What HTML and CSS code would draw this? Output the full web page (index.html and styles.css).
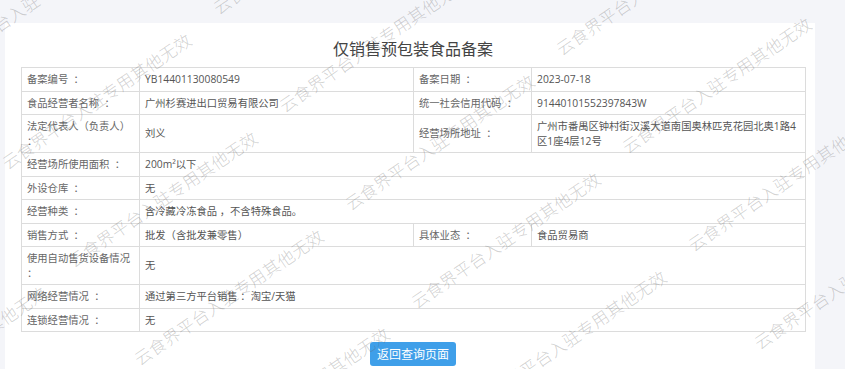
FILE: index.html
```html
<!DOCTYPE html>
<html lang="zh-CN">
<head>
<meta charset="utf-8">
<title>仅销售预包装食品备案</title>
<link rel="stylesheet" href="styles.css">
</head>
<body>
<div class="panel">
  <h1 class="title">仅销售预包装食品备案</h1>
  <table class="info">
    <colgroup>
      <col class="c-label"><col class="c-value"><col class="c-label"><col class="c-value">
    </colgroup>
    <tr><td class="lbl">备案编号&nbsp; ：</td><td>YB14401130080549</td><td class="lbl">备案日期&nbsp; ：</td><td>2023-07-18</td></tr>
    <tr><td class="lbl">食品经营者名称&nbsp; ：</td><td>广州杉赛进出口贸易有限公司</td><td class="lbl">统一社会信用代码&nbsp; ：</td><td>91440101552397843W</td></tr>
    <tr><td class="lbl">法定代表人（负责人）&nbsp; ：</td><td>刘义</td><td class="lbl">经营场所地址&nbsp; ：</td><td class="addr">广州市番禺区钟村街汉溪大道南国奥林匹克花园北奥1路4区1座4层12号</td></tr>
    <tr><td class="lbl">经营场所使用面积&nbsp; ：</td><td colspan="3">200m²以下</td></tr>
    <tr><td class="lbl">外设仓库&nbsp; ：</td><td colspan="3">无</td></tr>
    <tr><td class="lbl">经营种类&nbsp; ：</td><td colspan="3">含冷藏冷冻食品 ，不含特殊食品。</td></tr>
    <tr><td class="lbl">销售方式&nbsp; ：</td><td>批发（含批发兼零售）</td><td class="lbl">具体业态&nbsp; ：</td><td>食品贸易商</td></tr>
    <tr><td class="lbl">使用自动售货设备情况&nbsp; ：</td><td colspan="3">无</td></tr>
    <tr><td class="lbl">网络经营情况&nbsp; ：</td><td colspan="3">通过第三方平台销售 ：淘宝/天猫</td></tr>
    <tr><td class="lbl">连锁经营情况&nbsp; ：</td><td colspan="3">无</td></tr>
  </table>
  <div class="actions"><button class="btn">返回查询页面</button></div>
</div>
<div class="wm-layer" aria-hidden="true">
  <span class="wm w1">云食界平台入驻专用其他无效</span>
  <span class="wm w2">云食界平台入驻专用其他无效</span>
  <span class="wm w3">云食界平台入驻专用其他无效</span>
  <span class="wm w4">云食界平台入驻专用其他无效</span>
  <span class="wm w5">云食界平台入驻专用其他无效</span>
  <span class="wm w6">云食界平台入驻专用其他无效</span>
  <span class="wm w7">云食界平台入驻专用其他无效</span>
  <span class="wm w8">云食界平台入驻专用其他无效</span>
  <span class="wm w9">云食界平台入驻专用其他无效</span>
  <span class="wm w10">云食界平台入驻专用其他无效</span>
  <span class="wm w11">云食界平台入驻专用其他无效</span>
  <span class="wm w12">云食界平台入驻专用其他无效</span>
  <span class="wm w13">云食界平台入驻专用其他无效</span>
  <span class="wm w14">云食界平台入驻专用其他无效</span>
  <span class="wm w15">云食界平台入驻专用其他无效</span>
  <span class="wm w16">云食界平台入驻专用其他无效</span>
  <span class="wm w17">云食界平台入驻专用其他无效</span>
</div>
</body>
</html>
```
FILE: styles.css
```css
html, body {
  margin: 0;
  padding: 0;
}
body {
  background: #f4f5f9;
  width: 845px;
  height: 369px;
  overflow: hidden;
  position: relative;
  font-family: "Open Sans", "Noto Sans CJK SC", sans-serif;
}
.panel {
  margin: 23px 0 0 5px;
  width: 810px;
  min-height: 346px;
  box-sizing: border-box;
  background: #fff;
  padding: 13px 10px 0 16px;
}
.title {
  margin: 0 0 7px;
  text-align: center;
  font-family: "Noto Sans CJK SC", sans-serif;
  font-weight: normal;
  font-size: 16px;
  line-height: 24px;
  color: #444;
}
.info {
  width: 784px;
  border-collapse: collapse;
  table-layout: fixed;
  font-size: 10.3px;
  color: #555;
}
.c-label { width: 118px; }
.c-value { width: 274px; }
.info td {
  border: 1px solid #dcdcdc;
  padding: 4px 1px 4px 5px;
  line-height: 14.5px;
  vertical-align: middle;
  word-break: break-all;
}
.info td.lbl {
  color: #666;
}
.actions {
  display: flex;
  justify-content: center;
  padding-top: 10px;
}
.btn {
  height: 24px;
  padding: 0 7px;
  border: 0;
  border-radius: 3px;
  background: #3f9fe9;
  color: #fff;
  font-family: "Noto Sans CJK SC", sans-serif;
  font-size: 12px;
  line-height: 24px;
}
.wm-layer {
  position: absolute;
  left: 0;
  top: 0;
  width: 845px;
  height: 369px;
  overflow: hidden;
  pointer-events: none;
}
.wm {
  position: absolute;
  font-family: "Noto Sans CJK SC", sans-serif;
  font-weight: 200;
  font-size: 17px;
  line-height: 17px;
  letter-spacing: 0.3px;
  white-space: nowrap;
  color: rgba(100, 100, 100, 0.3);
  transform-origin: 8px 8.5px;
  transform: rotate(-34.4deg);
}
.w1 { left: -64px; top: 53px; }
.w2 { left: 2px; top: 151px; }
.w3 { left: 68px; top: 249px; }
.w4 { left: 134px; top: 347px; }
.w5 { left: 200px; top: 445px; }
.w6 { left: 213px; top: -4px; }
.w7 { left: 279px; top: 94px; }
.w8 { left: 345px; top: 192px; }
.w9 { left: 411px; top: 290px; }
.w10 { left: 477px; top: 388px; }
.w11 { left: 543px; top: 486px; }
.w12 { left: 556px; top: 37px; }
.w13 { left: 622px; top: 135px; }
.w14 { left: 688px; top: 233px; }
.w15 { left: 754px; top: 331px; }
.w16 { left: 833px; top: -20px; }
.w17 { left: -143px; top: 404px; }
```
